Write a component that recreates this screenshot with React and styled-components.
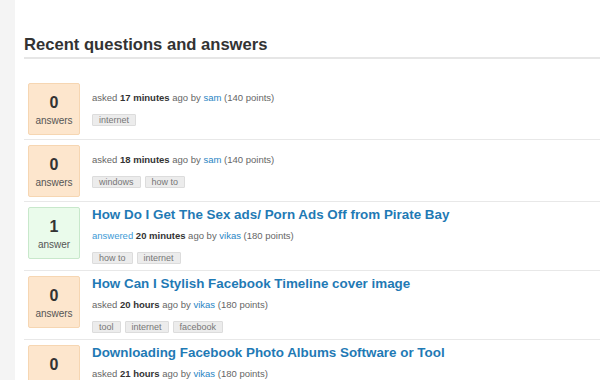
import React from "react";
import styled, { createGlobalStyle } from "styled-components";

const Global = createGlobalStyle`
  html, body { margin: 0; padding: 0; background: #f4f4f4; }
  body { font-family: Arial, "Liberation Sans", Helvetica, sans-serif; }
`;

const Page = styled.div`
  margin-left: 15px;
  background: #fff;
  min-height: 380px;
  padding: 35px 0 0 9px;
  overflow: hidden;
`;

const Heading = styled.h1`
  margin: 0;
  font-size: 16.6px;
  font-weight: bold;
  color: #333;
  line-height: 20px;
  padding-bottom: 2px;
  border-bottom: 2px solid #e6e6e6;
`;

const List = styled.div`
  margin-top: 19px;
`;

const Row = styled.div`
  display: flex;
  align-items: flex-start;
  padding: 5px 0 4px 4px;
  border-bottom: 1px solid #e8e8e8;
`;

const CountBox = styled.div`
  width: 50px;
  height: 41px;
  flex: none;
  border: 1px solid ${(p) => (p.$answered ? "#c8e8cb" : "#f6d6b2")};
  background: ${(p) => (p.$answered ? "#eafbeb" : "#fde6cd")};
  border-radius: 2px;
  display: flex;
  flex-direction: column;
  align-items: center;
  padding-top: 9px;
`;

const Count = styled.span`
  font-size: 16px;
  font-weight: bold;
  color: #333;
  line-height: 20px;
`;

const CountLabel = styled.span`
  font-size: 10px;
  color: #555;
  line-height: 13px;
  margin-top: 1px;
`;

const Body = styled.div`
  margin-left: 12px;
  padding-top: ${(p) => (p.$noTitle ? "7px" : "0")};
  padding-bottom: 2px;
  display: flex;
  flex-direction: column;
`;

const Title = styled.a`
  font-size: 13.4px;
  font-weight: bold;
  color: #1f7ab5;
  line-height: 16px;
  margin-bottom: 5px;
  text-decoration: none;
  white-space: nowrap;
`;

const Meta = styled.div`
  font-size: 9.5px;
  color: #666;
  line-height: 16px;
  white-space: nowrap;
  b { color: #333; }
`;

const UserLink = styled.a`
  color: ${(p) => (p.$light ? "#3d9ad6" : "#2a85c4")};
  text-decoration: none;
`;

const Tags = styled.div`
  display: flex;
  gap: 4px;
  margin-top: 8px;
`;

const Tag = styled.span`
  font-size: 9px;
  color: #777;
  background: #ececec;
  border: 1px solid #dcdcdc;
  border-radius: 1px;
  line-height: 10px;
  padding: 0 6px;
`;

const rows = [
  { n: 0, verb: "asked", when: "17 minutes", who: "sam", pts: 140, tags: ["internet"] },
  { n: 0, verb: "asked", when: "18 minutes", who: "sam", pts: 140, tags: ["windows", "how to"] },
  {
    n: 1,
    title: "How Do I Get The Sex ads/ Porn Ads Off from Pirate Bay",
    verb: "answered",
    when: "20 minutes",
    who: "vikas",
    pts: 180,
    tags: ["how to", "internet"],
  },
  {
    n: 0,
    title: "How Can I Stylish Facebook Timeline cover image",
    verb: "asked",
    when: "20 hours",
    who: "vikas",
    pts: 180,
    tags: ["tool", "internet", "facebook"],
  },
  {
    n: 0,
    title: "Downloading Facebook Photo Albums Software or Tool",
    verb: "asked",
    when: "21 hours",
    who: "vikas",
    pts: 180,
    tags: ["facebook"],
  },
];

export default function App() {
  return (
    <>
      <Global />
      <Page>
        <Heading>Recent questions and answers</Heading>
        <List>
          {rows.map((r, i) => (
            <Row key={i}>
              <CountBox $answered={r.n > 0}>
                <Count>{r.n}</Count>
                <CountLabel>{r.n === 1 ? "answer" : "answers"}</CountLabel>
              </CountBox>
              <Body $noTitle={!r.title}>
                {r.title && <Title href="#">{r.title}</Title>}
                <Meta>
                  {r.verb === "answered" ? (
                    <UserLink $light href="#">answered</UserLink>
                  ) : (
                    "asked"
                  )}{" "}
                  <b>{r.when}</b> ago by <UserLink href="#">{r.who}</UserLink> ({r.pts} points)
                </Meta>
                <Tags>
                  {r.tags.map((t) => (
                    <Tag key={t}>{t}</Tag>
                  ))}
                </Tags>
              </Body>
            </Row>
          ))}
        </List>
      </Page>
    </>
  );
}
